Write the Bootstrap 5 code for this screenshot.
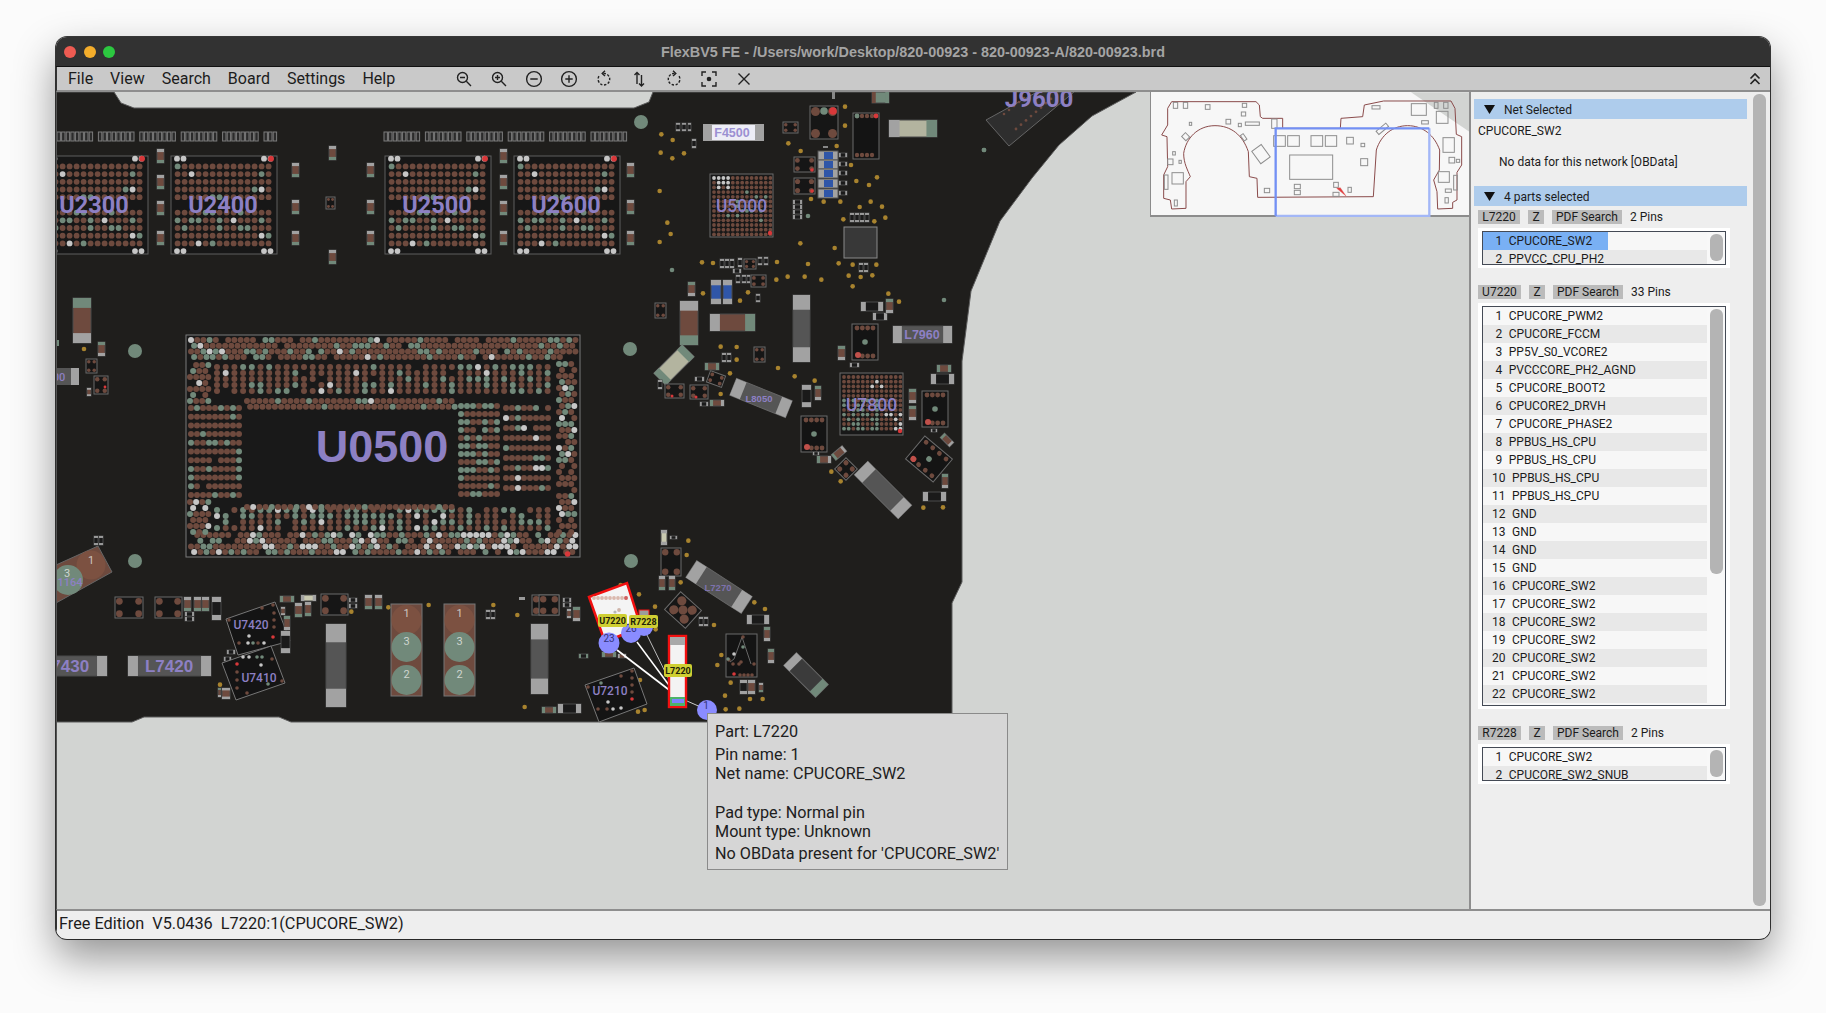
<!DOCTYPE html>
<html lang="en">
<head>
    <meta charset="UTF-8">
    <title>FlexBV5 FE</title>
    <link href="https://cdn.jsdelivr.net/npm/bootstrap@5.3.0/dist/css/bootstrap.min.css" rel="stylesheet">
    <style>
        html, body { height: 100%; overflow: hidden; }
        body { background: #fbfbfb; font-family: Roboto, "Liberation Sans", sans-serif; color: #1c1c1c; }
        .app-window { margin: 37px 0 0 56px; width: 1714px; height: 902px; border-radius: 11px; overflow: hidden; background: #eee; box-shadow: 0 18px 42px rgba(0,0,0,.42), 0 0 0 1px rgba(25,25,25,.85); }
        .title-bar { height: 30px; background: #323232; border-bottom: 1px solid #111; position: relative; }
        .title-text { font: 700 14.4px "Liberation Sans", sans-serif; color: #a4a4a4; }
        .traffic { width: 12px; height: 12px; border-radius: 50%; }
        .tl-red { background: #ee5b52; }
        .tl-amber { background: #f4ad2b; }
        .tl-green { background: #2cc840; }
        .traffic-row { position: absolute; left: 8px; top: 9px; gap: 7.6px; }
        .menu-bar { height: 25px; background: #c9c9c9; border-bottom: 2px solid #8e8e8e; padding: 1px 0 0 11px; font-size: 16px; gap: 17px; border-left: 1px solid #333; }
        .tool-group { margin-left: 34px; }
        .tool-icon { width: 35px; height: 20px; display: flex; align-items: center; justify-content: center; }
        .tool-icon svg { width: 18px; height: 18px; fill: none; stroke: #222; stroke-width: 1.4; }
        .collapse-icon { margin-left: auto; margin-right: 8px; }
        .collapse-icon svg { width: 14px; height: 14px; fill: none; stroke: #222; stroke-width: 1.6; display: block; }
        .main-area { height: 817px; }
        .board-canvas { width: 1413px; height: 817px; position: relative; background: #d2d4d2; overflow: hidden; border-left: 1px solid #555; flex: none; }
        .board-canvas > svg { display: block; position: absolute; left: -1px; top: 0; }
        .mini-map { position: absolute; left: 1093px; top: 0; width: 320px; height: 125px; background: #f7f7f7; border-left: 1px solid #8c8c8c; border-bottom: 2px solid #8c8c8c; }
        .mini-map svg { display: block; position: absolute; left: 0; top: 0; }
        .tip-box { position: absolute; left: 650px; top: 621px; width: 301px; height: 157px; background: #d6d6d6; border: 1px solid #8a8a8a; padding: 8px 7px; font-size: 16.2px; line-height: 19px; color: #202020; white-space: pre; }
        .tip-gap { margin-top: 4px; }
        .tip-gap-lg { margin-top: 20px; }
        .tip-gap-sm { margin-top: 3px; }
        .side-panel { width: 301px; background: #eeeeee; border-left: 2px solid #8e8e8e; font-size: 12px; line-height: 18px; flex: none; }
        .side-col { width: 273px; margin-left: 3px; padding-top: 7px; flex: none; }
        .side-track { width: 13px; margin: 2px 0 3px 6px; background: #b4b4b4; border-radius: 6px; flex: none; }
        .sect-head { height: 20px; background: #aeccec; padding-left: 10px; gap: 9px; line-height: 20px; }
        .sect-head svg { width: 11px; height: 9px; fill: #111; display: block; }
        .sect-head span { padding-top: 1px; }
        .net-name { padding: 3px 0 0 4px; height: 21px; }
        .net-note { padding-left: 25px; margin-top: 13px; height: 33px; }
        .part-row { height: 14px; margin: 4px 0 0 4px; line-height: 14px; gap: 8px; }
        .part-btn { background: #bbbbbb; padding: 0; height: 14px; line-height: 14px; border: 0; border-radius: 0; font-size: 12px; color: #1c1c1c; }
        .part-id { width: 43px; }
        .part-id-sm { width: 42px; }
        .part-z { width: 16px; }
        .part-pdf { width: 70px; }
        .pin-frame { margin: 4px 0 17px 4px; width: 252px; background: #fff; padding: 3px 4px; }
        .pin-box { border: 1px solid #444a55; position: relative; overflow: hidden; background: #f8f8f8; }
        .pin-box.box-sm { height: 34px; }
        .pin-box.box-lg { height: 400px; }
        .pin-list { margin: 0; padding: 0; list-style: none; width: 224px; }
        .pin-row { height: 18px; background: #f7f7f7; padding-left: 12.5px; white-space: nowrap; }
        .pin-row.pin-wide { padding-left: 9px; }
        .pin-row:nth-child(even) { background: #e8e8e8; }
        .pin-row span { margin-right: 6.5px; }
        .pin-hit { display: inline-block; background: #79b0f4; width: 125px; margin-left: -12.5px; padding-left: 12.5px; }
        .pin-thumb { position: absolute; left: 227px; top: 2px; width: 13px; background: #b4b4b4; border-radius: 6px; }
        .box-sm .pin-thumb { height: 27px; }
        .box-lg .pin-thumb { height: 265px; }
        .status-line { height: 29px; border-top: 2px solid #8e8e8e; background: #eeeeee; padding-left: 2px; font-size: 16.3px; line-height: 25px; white-space: pre; border-left: 1px solid #333; }
    </style>
</head>
<body>
    <div class="app-window d-flex flex-column">
        <div class="title-bar d-flex align-items-center justify-content-center">
            <div class="traffic-row d-flex">
                <div class="traffic tl-red"></div>
                <div class="traffic tl-amber"></div>
                <div class="traffic tl-green"></div>
            </div>
            <div class="title-text">FlexBV5 FE - /Users/work/Desktop/820-00923 - 820-00923-A/820-00923.brd</div>
        </div>
        <div class="menu-bar d-flex align-items-center">
            <span>File</span><span>View</span><span>Search</span><span>Board</span><span>Settings</span><span>Help</span>
            <div class="tool-group d-flex">
                <div class="tool-icon"><svg viewBox="0 0 18 18"><circle cx="7.5" cy="7.5" r="5"/><path d="M11.3 11.3L16 16M5 7.5h5" /></svg></div>
                <div class="tool-icon"><svg viewBox="0 0 18 18"><circle cx="7.5" cy="7.5" r="5"/><path d="M11.3 11.3L16 16M5 7.5h5M7.5 5v5" /></svg></div>
                <div class="tool-icon"><svg viewBox="0 0 18 18"><circle cx="9" cy="9" r="7.4"/><path d="M5.3 9h7.4"/></svg></div>
                <div class="tool-icon"><svg viewBox="0 0 18 18"><circle cx="9" cy="9" r="7.4"/><path d="M5.3 9h7.4M9 5.3v7.4"/></svg></div>
                <div class="tool-icon"><svg viewBox="0 0 18 18"><path d="M8.5 3.4A5.8 5.8 0 1 1 4.7 5.2" stroke-dasharray="2.4 1.6"/><path d="M10 .8L7.2 3.4 10 6"/></svg></div>
                <div class="tool-icon"><svg viewBox="0 0 18 18"><path d="M7 14V2.5M4.5 5L7 2.5 9.500 5M11.500 5v11M9 13.500l2.500 2.500 2.500-2.500"/></svg></div>
                <div class="tool-icon"><svg viewBox="0 0 18 18"><path d="M9.500 3.400A5.800 5.800 0 1 0 13.300 5.200" stroke-dasharray="2.4 1.6"/><path d="M8 .8l2.800 2.600L8 6"/></svg></div>
                <div class="tool-icon"><svg viewBox="0 0 18 18"><path d="M2 6V2h4M12 2h4v4M16 12v4h-4M6 16H2v-4"/><circle cx="9" cy="9" r="1.600" fill="#222"/></svg></div>
                <div class="tool-icon"><svg viewBox="0 0 18 18"><path d="M3.500 3.500l11 11M14.500 3.500l-11 11"/></svg></div>
            </div>
            <div class="collapse-icon"><svg viewBox="0 0 14 14"><path d="M2.500 6.500L7 2l4.500 4.500M2.500 12L7 7.500 11.500 12"/></svg></div>
        </div>
        <div class="main-area d-flex">
            <div class="board-canvas">
                <svg id="boardSvg" width="1413" height="817" viewBox="57 92 1413 817"></svg>
                <div class="mini-map">
                    <svg width="320" height="125" viewBox="1150 92 320 125">
                        <g id="miniMap" transform="translate(1140 85) scale(.33333)"></g>
                    </svg>
                </div>
                <div class="tip-box"><div>Part: L7220</div><div class="tip-gap">Pin name: 1</div><div>Net name: CPUCORE_SW2</div><div class="tip-gap-lg">Pad type: Normal pin</div><div>Mount type: Unknown</div><div class="tip-gap-sm">No OBData present for 'CPUCORE_SW2'</div></div>
            </div>
            <div class="side-panel d-flex">
                <div class="side-col">
                    <div class="sect-head d-flex align-items-center"><svg viewBox="0 0 11 9"><path d="M0 0h11L5.500 9z"/></svg><span>Net Selected</span></div>
                    <div class="net-name">CPUCORE_SW2</div>
                    <div class="net-note">No data for this network [OBData]</div>
                    <div class="sect-head d-flex align-items-center"><svg viewBox="0 0 11 9"><path d="M0 0h11L5.500 9z"/></svg><span>4 parts selected</span></div>

                    <div class="part-row d-flex">
                        <button class="btn part-btn part-id-sm">L7220</button><button class="btn part-btn part-z">Z</button><button class="btn part-btn part-pdf">PDF Search</button><span>2 Pins</span>
                    </div>
                    <div class="pin-frame">
                        <div class="pin-box box-sm">
                            <ul class="pin-list">
                                <li class="pin-row"><div class="pin-hit"><span>1</span>CPUCORE_SW2</div></li>
                                <li class="pin-row"><span>2</span>PPVCC_CPU_PH2</li>
                            </ul>
                            <div class="pin-thumb"></div>
                        </div>
                    </div>

                    <div class="part-row d-flex">
                        <button class="btn part-btn part-id">U7220</button><button class="btn part-btn part-z">Z</button><button class="btn part-btn part-pdf">PDF Search</button><span>33 Pins</span>
                    </div>
                    <div class="pin-frame">
                        <div class="pin-box box-lg">
                            <ul class="pin-list">
                                <li class="pin-row"><span>1</span>CPUCORE_PWM2</li>
                                <li class="pin-row"><span>2</span>CPUCORE_FCCM</li>
                                <li class="pin-row"><span>3</span>PP5V_S0_VCORE2</li>
                                <li class="pin-row"><span>4</span>PVCCCORE_PH2_AGND</li>
                                <li class="pin-row"><span>5</span>CPUCORE_BOOT2</li>
                                <li class="pin-row"><span>6</span>CPUCORE2_DRVH</li>
                                <li class="pin-row"><span>7</span>CPUCORE_PHASE2</li>
                                <li class="pin-row"><span>8</span>PPBUS_HS_CPU</li>
                                <li class="pin-row"><span>9</span>PPBUS_HS_CPU</li>
                                <li class="pin-row pin-wide"><span>10</span>PPBUS_HS_CPU</li>
                                <li class="pin-row pin-wide"><span>11</span>PPBUS_HS_CPU</li>
                                <li class="pin-row pin-wide"><span>12</span>GND</li>
                                <li class="pin-row pin-wide"><span>13</span>GND</li>
                                <li class="pin-row pin-wide"><span>14</span>GND</li>
                                <li class="pin-row pin-wide"><span>15</span>GND</li>
                                <li class="pin-row pin-wide"><span>16</span>CPUCORE_SW2</li>
                                <li class="pin-row pin-wide"><span>17</span>CPUCORE_SW2</li>
                                <li class="pin-row pin-wide"><span>18</span>CPUCORE_SW2</li>
                                <li class="pin-row pin-wide"><span>19</span>CPUCORE_SW2</li>
                                <li class="pin-row pin-wide"><span>20</span>CPUCORE_SW2</li>
                                <li class="pin-row pin-wide"><span>21</span>CPUCORE_SW2</li>
                                <li class="pin-row pin-wide"><span>22</span>CPUCORE_SW2</li>
                            </ul>
                            <div class="pin-thumb"></div>
                        </div>
                    </div>

                    <div class="part-row d-flex">
                        <button class="btn part-btn part-id">R7228</button><button class="btn part-btn part-z">Z</button><button class="btn part-btn part-pdf">PDF Search</button><span>2 Pins</span>
                    </div>
                    <div class="pin-frame">
                        <div class="pin-box box-sm">
                            <ul class="pin-list">
                                <li class="pin-row"><span>1</span>CPUCORE_SW2</li>
                                <li class="pin-row"><span>2</span>CPUCORE_SW2_SNUB</li>
                            </ul>
                            <div class="pin-thumb"></div>
                        </div>
                    </div>
                </div>
                <div class="side-track"></div>
            </div>
        </div>
        <div class="status-line">Free Edition  V5.0436  L7220:1(CPUCORE_SW2)</div>
    </div>

    <script src="https://cdn.jsdelivr.net/npm/bootstrap@5.3.0/dist/js/bootstrap.bundle.min.js"></script>
    <script>
        // palette taken from the board view
        const BROWN = '#6e4a3e', GREEN = '#71897a', WHITE = '#c6c6c6', RED = '#d8383a';
        const GREY = '#a2a2a2', DARK = '#555', GOLD = '#a8832e', VIOLET = '#8d80c4', LINE = '#6a6a6a';
        let out = '';
        let seed = 7;
        const rnd = () => { seed = (seed * 16807) % 2147483647; return seed / 2147483647; };

        const rect = (x, y, w, h, fill, stroke) => { out += `<rect x="${x}" y="${y}" width="${w}" height="${h}" fill="${fill}" stroke="${stroke || 'none'}"/>`; };
        const dot = (x, y, r, fill) => { out += `<circle cx="${x}" cy="${y}" r="${r}" fill="${fill}"/>`; };
        const poly = (pts, fill, stroke, sw) => { out += `<polygon points="${pts}" fill="${fill}" stroke="${stroke || 'none'}" stroke-width="${sw || 1}"/>`; };
        const text = (x, y, str, size, opts) => {
            const o = opts || {};
            out += `<text x="${x}" y="${y}" font-size="${size}" text-anchor="middle" dominant-baseline="central" font-family="${o.font || 'Liberation Sans'}" font-weight="${o.weight || 700}" fill="${o.fill || VIOLET}">${str}</text>`;
        };
        // two pad chip, runs along its longer side
        const chip = (x1, y1, x2, y2, a, mid, b, frac) => {
            const w = x2 - x1, h = y2 - y1, f = frac || 0.22;
            rect(x1, y1, w, h, mid, '#4a4a4a');
            if (h >= w) {
                const c = h * f;
                rect(x1, y1, w, c, a); rect(x1, y2 - c, w, c, b);
            } else {
                const c = w * f;
                rect(x1, y1, c, h, a); rect(x2 - c, y1, c, h, b);
            }
        };
        const tiny = (x1, y1, x2, y2) => chip(x1, y1, x2, y2, '#999', '#1a1a1a', '#999');
        const resistor = (x1, y1, x2, y2) => chip(x1, y1, x2, y2, GREY, BROWN, GREEN);
        const rotChip = (cx, cy, len, wid, ang, a, mid, b) => {
            out += `<g transform="rotate(${ang} ${cx} ${cy})">`;
            rect(cx - len / 2, cy - wid / 2, len, wid, mid, '#666');
            rect(cx - len / 2, cy - wid / 2, len * 0.18, wid, a);
            rect(cx + len / 2 - len * 0.18, cy - wid / 2, len * 0.18, wid, b);
            out += '</g>';
        };
        const corners = (x1, y1, x2, y2) => {
            const r = Math.min(x2 - x1, y2 - y1) * 0.16;
            rect(x1, y1, x2 - x1, y2 - y1, '#161616', LINE);
            [[x1 + r + 1, y1 + r + 1], [x2 - r - 1, y1 + r + 1], [x1 + r + 1, y2 - r - 1], [x2 - r - 1, y2 - r - 1]].forEach(p => dot(p[0], p[1], r, BROWN));
        };
        // regulator ic: dots along the two short sides, green centre, red pin one
        const regIc = (x1, y1, x2, y2) => {
            rect(x1, y1, x2 - x1, y2 - y1, '#141414', LINE);
            for (let i = 0; i < 4; i++) {
                dot(x1 + 5 + i * (x2 - x1 - 10) / 3, y1 + 4, 2.4, BROWN);
                if (i !== 0) dot(x1 + 5 + i * (x2 - x1 - 10) / 3, y2 - 4, 2.4, BROWN);
            }
            dot(x1 + 6, y2 - 5, 3, '#c0504a');
            dot((x1 + x2) / 2, (y1 + y2) / 2, 2.8, GREEN);
        };
        const pick = (g, w) => { const v = rnd(); return v < w ? WHITE : v < w + g ? GREEN : BROWN; };

        function field(x0, y0, x1, y1, dx, dy, r, g, w, fill, stagger) {
            let row = 0;
            for (let y = y0; y <= y1; y += dy, row++) {
                for (let x = x0 + (stagger && row % 2 ? dx / 2 : 0); x <= x1; x += dx) {
                    if (rnd() < fill) dot(x.toFixed(1), y.toFixed(1), r, pick(g, w));
                }
            }
        }

        function memoryChip(x, label) {
            seed = 4242;
            rect(x, 156, 106, 98, '#171717', '#5f5f5f');
            const top = 158.7, sp = 7.7;
            for (let r = 1; r < 12; r++) {
                if (r === 6) continue;
                for (let c = 0; c < 14; c++) dot(x + 6.6 + c * 7, top + r * sp, 2.9, pick(.2, .03));
            }
            [x + 6, x + 12.500, x + 93, x + 99.500].forEach(px => { dot(px, top, 2.9, WHITE); dot(px, top + 12 * sp, 2.9, WHITE); });
            dot(x + 100, top, 2.9, RED);
            text(x + 52, 205, label, 23.5, { font: 'Roboto', weight: 700 });
        }

        function bga(x1, y1, x2, y2, label, zones) {
            rect(x1, y1, x2 - x1, y2 - y1, '#181818', LINE);
            for (let y = y1 + 4; y < y2 - 2; y += 4.700) {
                for (let x = x1 + 4; x < x2 - 2; x += 4.700) {
                    let col = BROWN;
                    zones.forEach(z => { if (x > z[0] && x < z[2] && y > z[1] && y < z[3] && rnd() < z[5]) col = z[4]; });
                    dot(x.toFixed(1), y.toFixed(1), 1.9, col);
                }
            }
            dot(x2 - 3, y2 - 4, 2.200, RED);
            text((x1 + x2) / 2, (y1 + y2) / 2 + .5, label, 17.5, { font: 'Roboto', weight: 500 });
        }

        /* board outline */
        out += '<path d="M57 92H115L122 103 135 108H635L650 102 654 92H1137L1093 116 1060 145 1033 178 1001 221 972 291 963 361V582L953 603V722H292L280 717H145L133 722H57Z" fill="#1f1e1c" stroke="#5a5a5a"/>';

        // silk strips above the memory
        [[58, 278], [385, 625]].forEach(s => {
            for (let x = s[0]; x < s[1]; x += 4.600) {
                if ((Math.round((x - s[0]) / 4.600) + 1) % 9 !== 0) rect(x.toFixed(1), 132, 3.400, 9, '#2b2b2b', '#7c7c7c');
            }
        });

        memoryChip(43, 'U2300'); memoryChip(172, 'U2400'); memoryChip(386, 'U2500'); memoryChip(515, 'U2600');

        // decoupling caps around the memory
        [[158, 149], [158, 175], [158, 201], [158, 231], [293, 163], [293, 200], [293, 231], [368, 163], [368, 200], [368, 231],
         [501, 149], [501, 175], [501, 201], [501, 231], [628, 163], [628, 200], [628, 231], [330, 146], [330, 250]].forEach(c => resistor(c[0], c[1], c[0] + 7, c[1] + 14));
        corners(327, 197, 336, 209);

        // U0500
        seed = 99;
        rect(187, 335, 394, 222, '#191919', '#7a7a7a');
        field(192, 340, 577, 362, 6.200, 5.700, 3, .2, .03, .92, true);
        field(192, 535, 577, 555, 6.200, 5.700, 3, .2, .24, .92, true);
        field(191, 365, 211, 405, 6.100, 6.000, 3, .28, .02, .9, true);
        field(191, 502, 211, 533, 6.100, 6.000, 3, .25, .04, .9, true);
        field(560, 364, 578, 533, 6.100, 6.000, 3, .22, .08, .93, true);
        field(218, 367, 552, 396, 8.700, 6, 3, .24, .03, .97, false);
        field(218, 510, 552, 528, 8.700, 6, 3, .27, .08, .95, false);
        field(248, 401, 458, 410, 6.200, 5.700, 3, .15, .01, 1, true);
        field(248, 507, 458, 511, 6.200, 5.700, 3, .18, .02, 1, true);
        field(192, 408, 243, 498, 6, 8.700, 3, .2, 0, .99, false);
        field(462, 406, 503, 500, 6, 8, 3, .38, 0, .99, false);
        field(507, 408, 553, 490, 6, 10, 3, .18, .12, .98, false);
        dot(568.600, 554, 2.800, RED);
        text(383, 446, 'U0500', 45);

        // big green vias
        [[642, 122], [136, 351], [136, 561], [631, 349], [632, 561]].forEach(p => dot(p[0], p[1], 7, GREEN));

        // gold vias read off the upper right crop
        [[67,133],[101,150],[65,188],[100,205],[135,190],[62,303],[85,398],[95,432],[62,456],[618,50],[618,107],[593,168],[448,160],[485,183],[636,225],[652,273],[690,285],[714,262],[604,335],[554,335],[516,327],[662,351],[695,335],[729,350],[739,383],[706,394],[613,388],[484,460],[587,474],[599,520],[641,524],[712,524],[629,557],[665,561],[700,556],[641,589],[507,522],[497,560],[547,569],[446,560],[412,569],[414,516],[189,517],[222,519],[192,610],[327,607],[303,632],[748,611],[780,635],[245,770],[293,771],[293,809],[273,850],[245,912],[417,834],[467,859],[527,872],[577,1145],[605,1174],[853,1253],[912,1252]]
            .forEach(p => dot(640 + p[0] / 3, 90 + p[1] / 3, 2.300, GOLD));
        // and the lower right crop
        [[448,32],[443,75],[425,157],[300,193],[245,165],[348,230],[350,298],[525,285],[646,217],[678,237],[547,375],[535,405],[575,458],[558,497],[633,507],[671,507],[560,538],[601,536],[303,450],[297,545],[317,540]]
            .forEach(p => dot(540 + p[0] / 3, 530 + p[1] / 3, 2.300, GOLD));
        // and the lower left crop
        [[907,275],[1018,262],[1139,255],[1333,255],[1405,285],[1427,561],[513,494]].forEach(p => dot(50 + p[0] / 3, 520 + p[1] / 3, 2.300, GOLD));
        dot(85, 349, 2.300, GOLD);
        [[673, 270], [809, 216], [945, 300], [985, 150]].forEach(p => dot(p[0], p[1], 2.300, GREEN));

        // top right group
        tiny(677, 123, 681, 131); tiny(683, 123, 687, 131); tiny(689, 123, 692, 131); tiny(693, 139, 697, 148);
        rect(704, 124, 61, 17, GREY); rect(713, 125, 43, 15, '#ededf6');
        text(733, 132.500, 'F4500', 12.500, { fill: '#9b90d2' });
        corners(784, 122, 799, 133);
        corners(811, 106, 839, 139); dot(825, 111, 3.800, GREEN); dot(834, 111, 3.800, RED);
        rect(854, 113, 26, 46, '#141414', LINE);
        [858, 863, 868, 873].forEach(x => { dot(x, 116, 2.200, BROWN); dot(x, 155, 2.200, BROWN); });
        dot(858, 116, 2.400, GREEN); dot(877, 116, 2.400, RED);
        chip(890, 120, 938, 137, GREY, '#b3b49f', GREEN);
        chip(873, 92, 890, 103, BROWN, GREEN, GREEN);
        rect(833, 92, 3, 7, '#888');
        corners(795, 157, 816, 172); corners(795, 178, 816, 194); dot(813, 170, 1.800, RED); dot(813, 191, 1.800, RED);
        [151, 160, 169, 179, 189].forEach(y => { rect(819, y, 20, 9, GREY, '#555'); rect(825, y + 1, 9, 7, '#2f56a8'); tiny(840, y + 2, 848, y + 6); });
        rect(824, 146, 5, 2, '#888');
        [200, 205, 210, 215].forEach(y => tiny(794, y, 803, y + 4));
        rect(845, 227, 33, 31, '#383838', '#8a8a8a');
        [851, 856, 861, 866].forEach(x => tiny(x, 213, x + 4, 222));
        tiny(860, 263, 864, 272); tiny(865, 263, 869, 272);
        tiny(721, 259, 725, 268); tiny(726, 259, 730, 268); tiny(731, 259, 735, 268); tiny(739, 258, 743, 267);
        corners(745, 259, 757, 269); tiny(734, 269, 742, 273); tiny(759, 257, 763, 265); tiny(765, 257, 769, 265);
        tiny(737, 275, 741, 283); tiny(743, 275, 747, 283); tiny(748, 275, 751, 283); corners(752, 275, 767, 287);
        chip(712, 280, 722, 304, GREY, '#2f56a8', GREY); chip(724, 280, 733, 304, GREY, '#2f56a8', GREY);
        chip(689, 282, 696, 296, GREEN, BROWN, GREY);
        corners(656, 303, 667, 318);
        chip(681, 301, 699, 345, GREY, BROWN, GREEN);
        chip(711, 314, 756, 331, GREY, BROWN, GREEN);
        chip(794, 295, 811, 362, GREY, DARK, GREY);
        tiny(757, 294, 761, 302);
        chip(862, 302, 884, 311, GREY, '#1a1a1a', GREY); chip(874, 313, 888, 320, GREY, '#1a1a1a', GREY);
        chip(887, 299, 894, 313, GREEN, BROWN, GREY);
        chip(894, 326, 953, 343, GREY, DARK, GREY, .15); text(923, 335, 'L7960', 12.500);
        regIc(853, 324, 879, 360);
        chip(839, 346, 846, 360, GREEN, BROWN, GREY);
        chip(910, 389, 917, 403, GREEN, BROWN, GREY); chip(910, 406, 917, 420, GREEN, BROWN, GREY);
        regIc(923, 391, 949, 427); regIc(802, 416, 828, 452);
        chip(938, 365, 952, 372, GREEN, BROWN, GREEN); chip(932, 374, 955, 384, GREY, '#1a1a1a', GREY);
        tiny(932, 429, 938, 432); tiny(814, 452, 820, 455);
        chip(943, 474, 949, 488, GREEN, BROWN, GREY); chip(924, 492, 947, 501, GREY, '#1a1a1a', GREY);
        chip(803, 385, 812, 407, GREY, '#1a1a1a', GREY); chip(816, 386, 822, 400, GREEN, BROWN, GREY);
        tiny(851, 363, 860, 367);
        chip(818, 456, 832, 463, GREEN, BROWN, GREY);
        rotChip(840, 453, 14, 7, -40, GREEN, BROWN, GREY);
        rotChip(948, 440, 13, 6, 45, GREEN, BROWN, GREY);
        rotChip(884, 490, 62, 19, 45, GREY, DARK, GREY);
        rotChip(762, 398, 60, 18, 22, GREY, DARK, GREY); text(760, 398, 'L8050', 9.500);
        rotChip(675, 365, 40, 17, -45, GREEN, '#b3b49f', GREEN);
        out += '<g transform="rotate(45 847 469)">'; corners(839, 461, 855, 477); out += '</g>';
        out += '<g transform="rotate(20 717 379)">'; corners(709, 373, 725, 385); out += '</g>';
        out += '<g transform="rotate(40 930 459)">'; regIc(912, 444, 948, 474); out += '</g>';
        tiny(659, 380, 663, 389);
        corners(666, 384, 685, 398); dot(673, 396, 1.500, RED); corners(691, 385, 709, 399); dot(697, 397, 1.500, RED);
        chip(706, 363, 720, 370, GREEN, BROWN, GREEN); tiny(696, 377, 705, 381); chip(711, 400, 725, 406, GREEN, BROWN, GREY); tiny(701, 402, 709, 406);
        tiny(723, 353, 727, 362); tiny(728, 353, 732, 362); corners(755, 347, 766, 362);

        // U5000 and U7800
        seed = 31;
        bga(711, 174, 774, 237, 'U5000', [[711, 174, 735, 190, WHITE, .5], [725, 190, 770, 225, GREEN, .22]]);
        bga(841, 373, 904, 435, 'U7800', [[841, 395, 880, 432, GREEN, .5], [860, 380, 890, 390, WHITE, .3], [885, 410, 904, 435, WHITE, .3]]);

        // J9600
        poly('987,120 1010,146 1075,92 1038,92', '#2e2e2e', '#666');
        for (let i = 0; i < 9; i++) { dot(1017 + i * 5, 129 - i * 4.300, 1.400, BROWN); dot(1005 + i * 5, 114 - i * 4, 1.300, BROWN); }
        text(1040, 99, 'J9600', 24, { font: 'Roboto', weight: 700 });
        dot(985, 150, 2.300, GREEN);

        // left side small parts
        chip(74, 298, 92, 343, GREEN, BROWN, GREY);
        rect(57, 340, 3, 6, GREEN);
        chip(99, 342, 106, 356, GREEN, BROWN, GREY);
        corners(87, 359, 98, 373);
        rect(45, 368, 35, 17, DARK); rect(72, 368, 8, 17, GREY); text(60, 377, '00', 11, { font: 'Roboto', weight: 500 });
        corners(95, 376, 109, 394); dot(106, 387, 1.400, RED);
        chip(88, 388, 92, 396, GREY, BROWN, GREY);

        // lower left parts
        poly('57,565 99,546 113,572 57,603', BROWN, '#666');
        dot(92, 565, 14.500, '#7c5141'); dot(69, 580, 15, GREEN);
        text(92, 560, '1', 11, { font: 'Roboto', weight: 400, fill: '#cfc6c0' }); text(68, 573, '3', 11, { font: 'Roboto', weight: 400, fill: '#cfd6cf' });
        text(71, 582, '1164', 11, { font: 'Roboto', weight: 500 });
        tiny(95, 536, 99, 545); tiny(100, 536, 104, 545);
        corners(116, 597, 144, 618); corners(156, 597, 183, 618);
        [185, 195, 203].forEach(x => chip(x, 597, x + 7, 611, GREY, BROWN, GREEN));
        chip(213, 597, 222, 620, GREY, '#1a1a1a', GREY);
        tiny(186, 612, 195, 616); tiny(186, 617, 195, 621);
        tiny(228, 650, 236, 654); tiny(225, 657, 232, 661);

        function tiltedIc(pts, dots, label, lx, ly) {
            poly(pts, '#141414', '#777');
            dots.forEach(d => dot(d[0], d[1], 1.800, d[2]));
            text(lx, ly, label, 12, { font: 'Roboto', weight: 500 });
        }
        tiltedIc('227,619 276,602 291,641 239,655',
            [[230,620,BROWN],[263,608,BROWN],[274,605,BROWN],[275,613,BROWN],[275,620,BROWN],[275,627,BROWN],[274,637,RED],[240,643,BROWN],[249,643,WHITE],[254,643,GREEN],[259,643,BROWN],[265,643,WHITE],[250,636,WHITE]],
            'U7420', 252, 625);
        tiltedIc('223,663 272,646 286,683 237,700',
            [[244,657,WHITE],[250,657,WHITE],[258,657,GREEN],[263,657,GREEN],[273,659,BROWN],[238,664,RED],[238,672,BROWN],[238,680,BROWN],[238,688,BROWN],[248,693,BROWN],[269,684,GREEN],[283,681,BROWN],[262,665,WHITE]],
            'U7410', 260, 678);
        chip(281, 596, 295, 602, GREEN, BROWN, GREEN); chip(302, 595, 317, 601, GREY, '#c9c9b0', GREY);
        chip(296, 603, 303, 617, GREY, BROWN, GREEN); chip(306, 602, 312, 616, GREY, BROWN, GREEN);
        corners(322, 594, 349, 615); tiny(350, 598, 358, 602); tiny(350, 604, 358, 608);
        chip(366, 595, 373, 609, GREY, BROWN, GREEN); chip(376, 595, 383, 609, GREY, BROWN, GREEN);
        chip(282, 607, 286, 615, GREY, BROWN, GREY); chip(285, 616, 291, 630, GREEN, BROWN, GREY);
        chip(282, 631, 291, 653, GREY, '#1a1a1a', GREY);
        chip(223, 688, 231, 699, GREY, BROWN, GREY); chip(219, 688, 222, 697, GREEN, BROWN, GREY);
        chip(129, 656, 212, 676, GREY, DARK, GREY, .12); text(170, 666, 'L7420', 17);
        chip(25, 656, 108, 676, GREY, DARK, GREY, .12); text(66, 666, 'L7430', 17);
        chip(327, 624, 347, 707, GREY, DARK, GREY);
        [392, 445].forEach(x => {
            rect(x, 604, 31, 92, BROWN, '#777');
            dot(x + 15.500, 620, 15, '#7c5141'); dot(x + 15.500, 647, 15, GREEN); dot(x + 15.500, 680, 15, GREEN);
            text(x + 15.500, 613, '1', 11, { font: 'Roboto', weight: 400, fill: '#cfc6c0' });
            text(x + 15.500, 641, '3', 11, { font: 'Roboto', weight: 400, fill: '#cfd6cf' });
            text(x + 15.500, 674, '2', 11, { font: 'Roboto', weight: 400, fill: '#cfd6cf' });
        });
        tiny(487, 610, 491, 619); tiny(492, 610, 496, 619);
        rect(520, 597, 6, 3, '#999');
        chip(532, 624, 549, 694, GREY, DARK, GREY);
        corners(533, 595, 560, 615); tiny(564, 598, 572, 602); tiny(564, 603, 572, 607);
        chip(568, 609, 572, 618, GREY, BROWN, GREY); chip(574, 607, 581, 621, GREEN, BROWN, GREY);
        chip(543, 707, 557, 713, GREEN, BROWN, GREEN); chip(559, 704, 582, 713, GREY, '#1a1a1a', GREY);

        // parts above the highlighted group
        corners(662, 548, 682, 576);
        chip(660, 576, 666, 590, GREY, BROWN, GREEN); chip(670, 576, 676, 590, GREY, BROWN, GREEN);
        chip(662, 530, 668, 545, GREY, '#c9c9b0', GREY); tiny(671, 536, 678, 539);
        rotChip(720, 587, 66, 20, 33, GREY, DARK, GREY); text(719, 587, 'L7270', 9.500, { fill: '#7d72ad' });
        out += '<g transform="rotate(42 684 610)">'; rect(670, 598, 28, 24, '#161616', LINE);
        [[677, 604], [691, 604], [677, 616], [691, 616], [684, 610]].forEach(p => dot(p[0], p[1], 4.600, BROWN)); out += '</g>';
        tiny(700, 617, 704, 626); tiny(705, 617, 709, 626);
        chip(748, 615, 770, 624, GREY, '#1a1a1a', GREY);
        chip(765, 627, 771, 641, GREEN, BROWN, GREY); chip(769, 649, 775, 663, GREEN, BROWN, GREY);
        rect(727, 634, 31, 43, '#141414', LINE);
        out += '<path d="M743 637L735 659 731 662M743 637L752 664" stroke="#666" fill="none"/>';
        [[744,637,BROWN],[734,664,BROWN],[730,660,BROWN],[735,654,WHITE],[729,659,GREEN],[744,647,GREEN],[740,664,BROWN],[735,674,RED],[741,675,BROWN],[745,675,BROWN],[749,675,BROWN],[753,675,BROWN],[755,664,BROWN],[742,662,BROWN]]
            .forEach(d => dot(d[0], d[1], 1.800, d[2]));
        rotChip(807, 675, 45, 18, 45, GREY, '#3b3b3b', GREEN);
        chip(741, 680, 748, 694, GREY, '#1a1a1a', GREY); chip(749, 680, 756, 694, GREY, BROWN, GREY); chip(760, 683, 764, 692, GREY, BROWN, GREEN);
        corners(540, 595, 560, 615);

        // U7210
        tiltedIc('586,685 635,668 648,704 600,722',
            [[589,687,BROWN],[622,676,BROWN],[633,671,BROWN],[633,678,BROWN],[633,685,BROWN],[633,692,BROWN],[633,699,RED],[599,709,BROWN],[608,709,BROWN],[614,709,WHITE],[622,708,WHITE],[609,702,WHITE],[602,683,GREEN]],
            'U7210', 611, 691);
        chip(580, 654, 589, 658, GREEN, '#1a1a1a', GREEN);

        // highlighted U7220 / R7228 / L7220
        poly('590,597 628,583 642,627 606,642', '#f4f4f4', '#f21010', 2.500);
        for (let i = 0; i < 9; i++) dot(595 + i * 4, 598, 1.900, '#dab9ae');
        dot(627, 598, 1.900, '#d06060'); dot(620, 610, 1.900, '#cfb5aa'); dot(616, 612, 1.600, '#b8b8b8');
        chip(603, 652, 617, 657, GREEN, BROWN, GREEN); chip(619, 654, 627, 658, GREY, BROWN, GREY);
        rect(640, 610, 10, 23, '#9d9d9d', '#f21010');

        out += '<path d="M678 696L618 650" stroke="#fff" stroke-width="1.700"/><path d="M678 696L638 642" stroke="#fff" stroke-width="1.500"/><path d="M678 696L647 633" stroke="#bbb"/><path d="M688 701L704 708" stroke="#ccc"/>';

        const blue = '#8a8cff';
        dot(645, 627, 9, blue); dot(632, 633, 10, blue); dot(610, 643, 10.500, blue);
        text(610, 638, '23', 10, { font: 'Roboto', weight: 400, fill: '#33337a' });
        text(632, 628, '26', 10, { font: 'Roboto', weight: 400, fill: '#33337a' });

        out += '<rect x="670" y="636" width="17" height="71" fill="#f3f3f3" stroke="#f21010" stroke-width="2.400"/>';
        rect(671, 637, 15, 8, '#a8a8a8');
        rect(671, 697, 15, 9, '#4db36a'); rect(673, 699, 12, 4, '#7a84ff');

        const yellow = (x1, y1, x2, y2, s) => {
            out += `<rect x="${x1}" y="${y1}" width="${x2 - x1}" height="${y2 - y1}" rx="2" fill="#cfcf33"/>`;
            text((x1 + x2) / 2, (y1 + y2) / 2, s, 9, { font: 'Roboto', weight: 700, fill: '#22220a' });
        };
        yellow(599, 614, 628, 627, 'U7220'); yellow(630, 615, 659, 628, 'R7228'); yellow(665, 664, 693, 677, 'L7220');

        dot(708, 710, 10, blue);
        text(707, 705, '1', 10, { font: 'Roboto', weight: 400, fill: '#33337a' });

        document.getElementById('boardSvg').innerHTML = out;

        // mini map, in the crop's own coordinates
        out = '';
        poly('810,22 1000,22 1000,150', '#d2d4d2');
        out += '<path d="M92 50H345L355 60 358 95 365 100H425V130H598L600 100 665 95 670 60 728 48H930L942 70 946 148 962 155V240L948 262V345L935 352V370L890 372 888 320 878 285 895 255 896 195C880 150 845 122 800 122 755 122 720 150 706 195L697 335 350 337 348 280 325 275 322 200C305 150 270 122 222 122 170 122 135 160 128 205 128 235 140 255 148 275L135 290V370L92 372 88 345 68 340V270L80 245 78 155 62 150 80 120V70Z" fill="none" stroke="#8a4a4a" stroke-width="3"/>';
        const box = (x1, y1, x2, y2, rot) => {
            const t = rot ? ` transform="rotate(${rot} ${(x1 + x2) / 2} ${(y1 + y2) / 2})"` : '';
            out += `<rect x="${x1}" y="${y1}" width="${x2 - x1}" height="${y2 - y1}" fill="none" stroke="#8e8e8e" stroke-width="3"${t}/>`;
        };
        [[97,52,110,70],[127,52,140,70],[193,59,207,73],[304,55,317,67],[301,81,314,93],[255,103,269,117],[292,115,301,125],[313,111,355,121],[145,112,152,121],
         [392,102,408,130],[398,152,433,184],[440,152,475,184],[510,152,545,184],[553,152,587,184],[617,157,637,177],[660,175,671,185],[446,210,575,283],[659,221,680,242],
         [693,62,717,72],[811,56,856,91],[842,107,862,117],[880,52,891,70],[908,52,921,70],[886,79,921,115],[906,158,940,202],[924,217,941,234],[946,223,956,232],
         [892,260,925,292],[938,271,949,315],[913,312,931,322],[912,338,922,354],[93,263,127,297],[70,270,81,313],[80,222,96,239],[95,200,103,210],[114,226,121,235],[100,345,109,363],[370,310,386,323],[460,298,478,311],[460,316,478,329],[578,292,592,307],[576,322,594,334],[621,307,631,322]]
            .forEach(b => box(b[0], b[1], b[2], b[3]));
        box(337, 190, 383, 225, 54); box(705, 125, 743, 138, -40); box(125, 147, 143, 163, 45); box(298, 152, 318, 162, 55);
        out += '<path d="M404 393H865V130" fill="none" stroke="#a3b7f7" stroke-width="7"/><path d="M404 393V130H865" fill="none" stroke="#7390f4" stroke-width="7"/>';
        out += '<path d="M587 310L615 333 598 308Z" fill="#e04040" stroke="#e04040"/>';
        document.getElementById('miniMap').innerHTML = out;
    </script>
</body>
</html>
